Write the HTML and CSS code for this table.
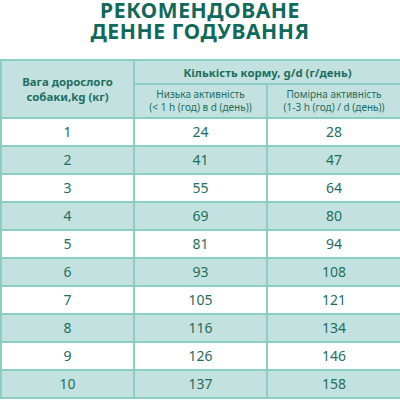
FILE: index.html
```html
<!DOCTYPE html>
<html lang="uk">
<head>
<meta charset="utf-8">
<link rel="stylesheet" href="styles.css">
</head>
<body>
<h1 class="title"><span class="tline">РЕКОМЕНДОВАНЕ</span><span class="tline">ДЕННЕ ГОДУВАННЯ</span></h1>
<table class="feed">
  <colgroup><col class="c1"><col class="c2"><col class="c3"></colgroup>
  <thead>
    <tr class="h1row">
      <th rowspan="2" class="main">Вага дорослого<br>собаки,kg (кг)</th>
      <th colspan="2" class="main">Кількість корму, g/d (г/день)</th>
    </tr>
    <tr class="h2row">
      <th class="sub">Низька активність<br>(&lt; 1 h (год) в d (день))</th>
      <th class="sub">Помірна активність<br>(1-3 h (год) / d (день))</th>
    </tr>
  </thead>
  <tbody>
    <tr><td>1</td><td>24</td><td>28</td></tr>
    <tr><td>2</td><td>41</td><td>47</td></tr>
    <tr><td>3</td><td>55</td><td>64</td></tr>
    <tr><td>4</td><td>69</td><td>80</td></tr>
    <tr><td>5</td><td>81</td><td>94</td></tr>
    <tr><td>6</td><td>93</td><td>108</td></tr>
    <tr><td>7</td><td>105</td><td>121</td></tr>
    <tr><td>8</td><td>116</td><td>134</td></tr>
    <tr><td>9</td><td>126</td><td>146</td></tr>
    <tr><td>10</td><td>137</td><td>158</td></tr>
  </tbody>
</table>
</body>
</html>
```
FILE: styles.css
```css
html, body {
  margin: 0;
  padding: 0;
  background: #ffffff;
}
body {
  width: 400px;
  font-family: "Noto Sans", "Open Sans", sans-serif;
  color: #1d6e60;
}
.title {
  margin: 0 0 17px 0;
  font-size: 21px;
  font-weight: 700;
  letter-spacing: 0.6px;
  text-align: center;
  color: #10695a;
}
.tline {
  display: block;
  line-height: 21px;
}
.feed {
  width: 400px;
  border-collapse: collapse;
  table-layout: fixed;
}
.c1 { width: 133px; }
.c2 { width: 133px; }
.c3 { width: 134px; }
.feed th, .feed td {
  border: 2px solid #8bcfc3;
  text-align: center;
  padding: 0;
}
.feed th {
  background: #c3e2df;
}
.main {
  font-size: 11.4px;
  line-height: 15px;
  font-weight: 700;
}
.sub {
  font-size: 10px;
  line-height: 13px;
  font-weight: 400;
}
.h1row { height: 24px; }
.h2row { height: 34px; }
.feed td {
  height: 26px;
  font-size: 14px;
  line-height: 20px;
}
.feed tbody tr:nth-child(even) td {
  background: #c3e2df;
}
```
